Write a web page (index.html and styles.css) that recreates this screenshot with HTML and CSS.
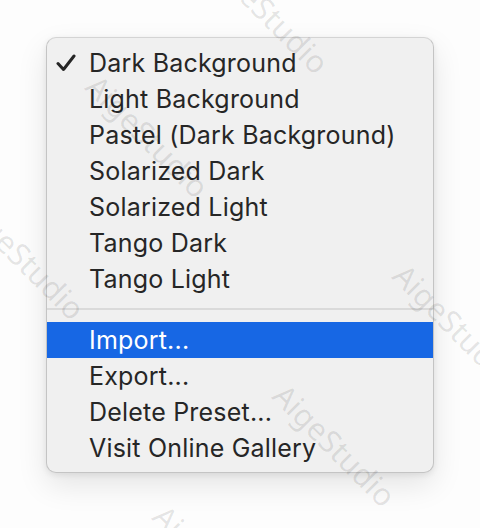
FILE: index.html
```html
<!DOCTYPE html>
<html>
<head>
<meta charset="utf-8">
<link rel="stylesheet" href="styles.css">
</head>
<body>
<div class="stage">
  <div class="menu">
    <div class="item"><span class="check"><svg width="20" height="18" viewBox="0 0 20 18"><path d="M2 9.5 L7.5 15.5 L18 2" fill="none" stroke="#262626" stroke-width="3" stroke-linecap="round" stroke-linejoin="round"/></svg></span>Dark Background</div>
    <div class="item">Light Background</div>
    <div class="item">Pastel (Dark Background)</div>
    <div class="item">Solarized Dark</div>
    <div class="item">Solarized Light</div>
    <div class="item">Tango Dark</div>
    <div class="item">Tango Light</div>
    <div class="sep"></div>
    <div class="item active">Import...</div>
    <div class="item">Export...</div>
    <div class="item">Delete Preset...</div>
    <div class="item">Visit Online Gallery</div>
  </div>
  <span class="wm w1">AigeStudio</span>
  <span class="wm w2">AigeStudio</span>
  <span class="wm w3">AigeStudio</span>
  <span class="wm w4">AigeStudio</span>
  <span class="wm w5">AigeStudio</span>
  <span class="wm w6">AigeStudio</span>
</div>
</body>
</html>
```
FILE: styles.css
```css
html, body {
  margin: 0;
  padding: 0;
  background: #fdfdfd;
}
.stage {
  position: relative;
  width: 480px;
  height: 528px;
  overflow: hidden;
  padding: 37px 0 0 46px;
  box-sizing: border-box;
  font-family: Inter, "Noto Sans", "Liberation Sans", sans-serif;
}
.menu {
  width: 388px;
  box-sizing: border-box;
  background: #f0f0f0;
  border: 1px solid #c4c4c4;
  border-top-color: #d4d4d4;
  border-radius: 10px;
  padding: 7px 0 6px;
  box-shadow: 0 12px 30px rgba(0,0,0,0.10), 0 2px 6px rgba(0,0,0,0.08);
  overflow: hidden;
}
.item {
  position: relative;
  height: 36px;
  line-height: 36px;
  padding-left: 42px;
  font-size: 25px;
  letter-spacing: 0.2px;
  color: #262626;
  white-space: nowrap;
}
.item.active {
  background: #1767e4;
  color: #ffffff;
}
.check {
  position: absolute;
  left: 9px;
  top: 9px;
  width: 20px;
  height: 18px;
  display: block;
  line-height: 0;
}
.sep {
  height: 2px;
  background: #dadada;
  margin: 11px 0 12px;
}
.wm {
  position: absolute;
  font-family: "Noto Sans", "Liberation Sans", sans-serif;
  font-size: 31px;
  color: rgba(0,0,0,0.10);
  transform: translate(-50%, -50%) rotate(45deg);
  white-space: nowrap;
  pointer-events: none;
}
.w1 { left: 268px; top: 12px; }
.w2 { left: 148px; top: 136px; }
.w3 { left: 24px; top: 258px; }
.w4 { left: 455px; top: 325px; }
.w5 { left: 335px; top: 445px; }
.w6 { left: 215px; top: 566px; }
```
